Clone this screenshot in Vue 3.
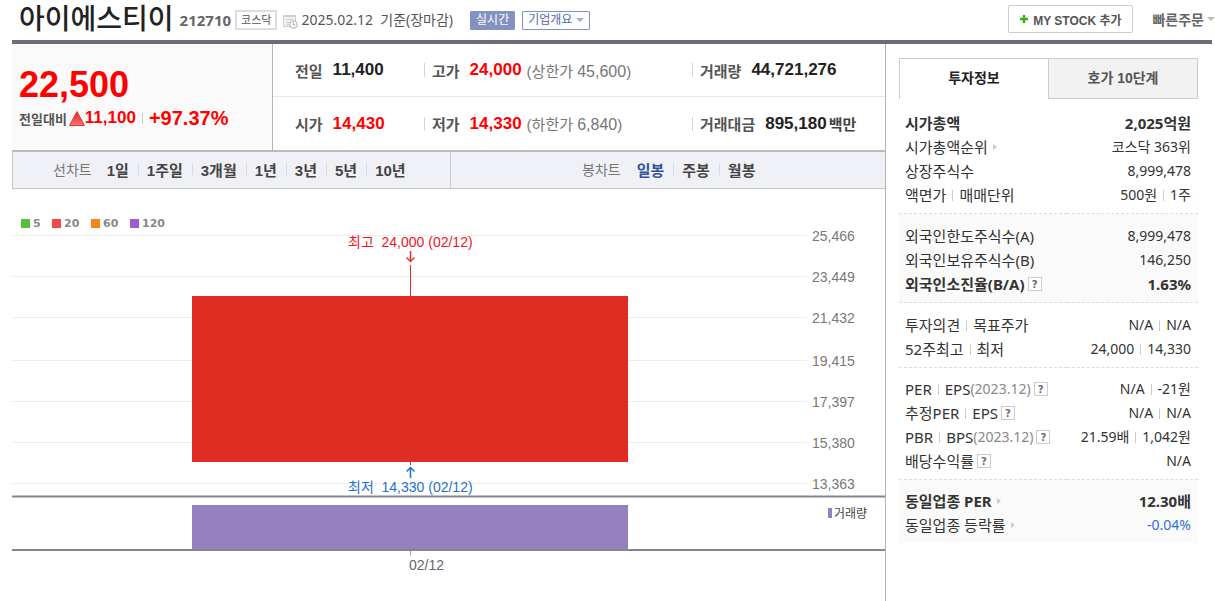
<script setup>
const linePeriods = ['1일', '1주일', '3개월', '1년', '3년', '5년', '10년']
const candlePeriods = ['일봉', '주봉', '월봉']

const averages = [
  { days: 5, cls: 'green', x: 9 },
  { days: 20, cls: 'red', x: 40 },
  { days: 60, cls: 'orange', x: 79 },
  { days: 120, cls: 'purple', x: 118 },
]

const ticks = [
  { label: '25,466', y: 46 },
  { label: '23,449', y: 87 },
  { label: '21,432', y: 128 },
  { label: '19,415', y: 171 },
  { label: '17,397', y: 212 },
  { label: '15,380', y: 253 },
  { label: '13,363', y: 294 },
]

const groups = [
  {
    name: 'cap',
    rows: [
      { label: ['시가총액'], value: ['2,025억원'], strong: true },
      { label: ['시가총액순위'], value: ['코스닥 363위'], arrow: true },
      { label: ['상장주식수'], value: ['8,999,478'] },
      { label: ['액면가', '매매단위'], value: ['500원', '1주'] },
    ],
  },
  {
    name: 'foreign',
    shaded: true,
    rows: [
      { label: ['외국인한도주식수(A)'], value: ['8,999,478'] },
      { label: ['외국인보유주식수(B)'], value: ['146,250'] },
      { label: ['외국인소진율(B/A)'], value: ['1.63%'], strong: true, help: true },
    ],
  },
  {
    name: 'opinion',
    rows: [
      { label: ['투자의견', '목표주가'], value: ['N/A', 'N/A'] },
      { label: ['52주최고', '최저'], value: ['24,000', '14,330'] },
    ],
  },
  {
    name: 'ratio',
    rows: [
      { label: ['PER', 'EPS'], date: '(2023.12)', value: ['N/A', '-21원'], help: true },
      { label: ['추정PER', 'EPS'], value: ['N/A', 'N/A'], help: true },
      { label: ['PBR', 'BPS'], date: '(2023.12)', value: ['21.59배', '1,042원'], help: true },
      { label: ['배당수익률'], value: ['N/A'], help: true },
    ],
  },
  {
    name: 'sector',
    shaded: true,
    rows: [
      { label: ['동일업종 PER'], value: ['12.30배'], strong: true, arrow: true },
      { label: ['동일업종 등락률'], value: ['-0.04%'], arrow: true, down: true },
    ],
  },
]
</script>

<template>
  <div class="page">
    <header class="head">
      <h1>아이에스티이</h1>
      <span class="code">212710</span>
      <span class="market">코스닥</span>
      <svg class="clock" width="15" height="15" viewBox="0 0 15 15" aria-hidden="true">
        <path d="M.5 1.500H12.500V12.500H.5z" fill="#f1f1f1" stroke="#cfcfcf" />
        <path d="M1 2.500H12M3 5.500H10M3 8.500H7M3 10.500H6" stroke="#cfcfcf" fill="none" />
        <circle cx="10.500" cy="10.500" r="3.700" fill="#fff" stroke="#bdbdbd" stroke-width="1.300" />
        <path d="M10.500 8.500V11H12.500" stroke="#aaa" fill="none" />
      </svg>
      <span class="date">2025.02.12&nbsp; 기준(장마감)</span>
      <button type="button" class="live">실시간</button>
      <button type="button" class="outline">기업개요<i class="caret blue"></i></button>
      <div class="tools">
        <button type="button" class="mystock">
          <svg width="8" height="8" viewBox="0 0 8 8" aria-hidden="true">
            <path d="M4 0V8M0 4H8" stroke="#2fb40a" stroke-width="2.400" />
          </svg>MY STOCK 추가
        </button>
        <button type="button" class="quick">빠른주문<i class="caret"></i></button>
      </div>
    </header>

    <div class="body">
      <main>
        <section class="quote">
          <div class="now">
            <strong class="price">22,500</strong>
            <div class="diff">
              <span class="dlabel">전일대비</span>
              <svg width="16" height="15" viewBox="0 0 16 15" aria-hidden="true">
                <defs>
                  <linearGradient id="rise" x1="0" y1="0" x2="0" y2="1">
                    <stop offset="0" stop-color="#d92323" />
                    <stop offset="1" stop-color="#ff7474" />
                  </linearGradient>
                </defs>
                <path d="M8 .5L15.500 14.500H.5z" fill="url(#rise)" stroke="#e03a3a" />
              </svg>
              <strong class="amount">11,100</strong>
              <i class="bar"></i>
              <strong class="rate">+97.37%</strong>
            </div>
          </div>
          <div class="facts">
            <div class="frow">
              <div><b>전일</b><strong>11,400</strong></div>
              <div class="sep"><b>고가</b><strong class="up">24,000</strong><small>(상한가 <em>45,600</em>)</small></div>
              <div class="sep"><b>거래량</b><strong>44,721,276</strong></div>
            </div>
            <div class="frow">
              <div><b>시가</b><strong class="up">14,430</strong></div>
              <div class="sep"><b>저가</b><strong class="up">14,330</strong><small>(하한가 <em>6,840</em>)</small></div>
              <div class="sep"><b>거래대금</b><strong>895,180</strong><span class="unit">백만</span></div>
            </div>
          </div>
        </section>

        <nav class="periods">
          <div class="lines">
            <span class="kind">선차트</span>
            <button v-for="p in linePeriods" :key="p" type="button">{{ p }}</button>
          </div>
          <div class="candles">
            <span class="kind">봉차트</span>
            <button v-for="(p, i) in candlePeriods" :key="p" type="button" :class="{ on: i === 0 }">{{ p }}</button>
          </div>
        </nav>

        <svg class="chart" viewBox="0 0 873 411" role="img" aria-label="일봉 차트">
          <g class="grid">
            <path v-for="t in ticks" :key="t.label" :d="`M0 ${t.y + 0.5}H795`" />
            <path d="M398.500 46V307" />
          </g>
          <g class="axis">
            <text v-for="t in ticks" :key="t.label" x="800" :y="t.y + 6">{{ t.label }}</text>
          </g>
          <g v-for="a in averages" :key="a.days">
            <rect :class="a.cls" :x="a.x" y="30" width="9" height="9" />
            <text class="avg" :x="a.x + 12" y="38">{{ a.days }}</text>
          </g>
          <rect class="candle" x="180" y="107" width="436" height="166" />
          <path class="wick" d="M398.500 76V107M398.500 273V276" />
          <text class="high" x="336" y="58">최고&nbsp; 24,000 (02/12)</text>
          <path class="harrow" d="M398.500 62V72M394.500 68.500L398.500 72.500L402.500 68.500" />
          <text class="low" x="336" y="303">최저&nbsp; 14,330 (02/12)</text>
          <path class="larrow" d="M398.500 289V279M394.500 282.500L398.500 278.500L402.500 282.500" />
          <rect class="volume" x="180" y="316" width="436" height="45" />
          <path class="base" d="M0 307.500H873M0 361H873" />
          <path class="tick" d="M398.500 362V367" />
          <rect class="volume" x="816" y="319" width="4" height="10" />
          <text class="vlabel" x="822" y="329">거래량</text>
          <text class="day" x="397" y="381">02/12</text>
        </svg>
      </main>

      <aside>
        <div class="tabs" role="tablist">
          <button type="button" role="tab" aria-selected="true" class="active">투자정보</button>
          <button type="button" role="tab" aria-selected="false">호가 10단계</button>
        </div>
        <table>
          <tbody v-for="g in groups" :key="g.name" :class="{ shaded: g.shaded }">
            <tr v-for="(r, i) in g.rows" :key="i" :class="{ strong: r.strong, down: r.down }">
              <th scope="row">
                <div class="cell">
                  <template v-for="(t, k) in r.label" :key="k"><i v-if="k" class="bar"></i><span>{{ t }}</span></template>
                  <span v-if="r.date" class="ym">{{ r.date }}</span>
                  <i v-if="r.arrow" class="more"></i>
                  <button v-if="r.help" type="button" class="help">?</button>
                </div>
              </th>
              <td>
                <div class="cell end">
                  <template v-for="(t, k) in r.value" :key="k"><i v-if="k" class="bar"></i><span>{{ t }}</span></template>
                </div>
              </td>
            </tr>
          </tbody>
        </table>
      </aside>
    </div>
  </div>
</template>

<style>
body { background: #fff; overflow: hidden; }
</style>

<style scoped>
* { box-sizing: border-box; }
.page {
  padding: 0 3px 0 12px;
  font-family: "Noto Sans", "Noto Sans CJK KR", sans-serif;
  font-size: 14px;
  color: #333;
}
button {
  font: inherit;
  color: inherit;
  margin: 0;
  padding: 0;
  border: 0;
  background: none;
  white-space: nowrap;
}
i { display: inline-block; }

.head {
  display: flex;
  align-items: center;
  height: 44px;
  border-bottom: 4px solid #686d78;
  white-space: nowrap;
}
h1 { margin: 0 6px 5px 7px; font-size: 28px; line-height: 32px; font-weight: 500; color: #222; }
.code { font-size: 15px; font-weight: 700; color: #666; line-height: 20px; }
.market {
  margin: 0 6px 0 4px;
  padding: 0 4px;
  border: 2px solid #ddd;
  font-size: 11px;
  line-height: 16px;
  color: #555;
}
.clock { margin: 2px 3px 0 0; }
.date { color: #555; line-height: 20px; }
.live, .outline {
  height: 19px;
  border: 1px solid #8492c1;
  border-radius: 1px;
  font-size: 12px;
  line-height: 16px;
}
.live { margin-left: 17px; padding: 0 5px; background: #8492c1; color: #fff; }
.outline { display: flex; align-items: center; gap: 4px; margin-left: 7px; padding: 0 5px; color: #5468a8; background: #fcfcff; }
.caret { border: 4px solid transparent; border-top-color: #bbb; border-bottom: 0; }
.caret.blue { border-top-color: #9dabd5; }
.tools { display: flex; align-items: center; margin: 0 -3px 2px auto; font-weight: 700; font-size: 12px; }
.mystock {
  display: flex;
  align-items: center;
  gap: 5px;
  height: 28px;
  padding: 0 11px;
  border: 1px solid #ccc;
  border-radius: 2px;
  font-family: "Liberation Sans", "Noto Sans CJK KR", sans-serif;
  color: #555;
}
.quick { display: flex; align-items: center; gap: 3px; margin-left: 19px; font-size: 14px; font-weight: 700; color: #666; }

.body { display: flex; min-height: 557px; }
main { flex: 1; min-width: 0; border-right: 1px solid #b5b5b9; }

.quote {
  display: flex;
  height: 106px;
  font-family: "Liberation Sans", "Noto Sans CJK KR", sans-serif;
}
.now { width: 261px; padding: 20px 7px 0; background: #fafafa; border-right: 1px solid #b5b5bb; color: #f00; }
.price { display: block; font-size: 36px; line-height: 42px; }
.diff { display: flex; align-items: center; height: 24px; white-space: nowrap; }
.dlabel { margin-right: 2px; font-size: 13px; font-weight: 700; color: #555; }
.amount { font-size: 17px; }
.rate { font-size: 20px; }
.bar { width: 1px; height: 11px; margin: 0 6px; background: #ccc; }
.facts { flex: 1; }
.frow {
  display: grid;
  grid-template-columns: 129px 268px 1fr;
  align-items: center;
  height: 54px;
  padding-left: 22px;
  white-space: nowrap;
}
.frow:first-child { height: 52px; }
.frow + .frow { border-top: 1px solid #e8e8e8; }
.frow > div { display: flex; align-items: center; height: 20px; }
.sep::before { content: ""; width: 1px; height: 14px; margin-right: 7px; background: #d5d5d5; }
.frow b { margin-right: 10px; font-size: 15px; font-weight: 700; color: #555; }
.frow strong { font-size: 17px; color: #222; }
.frow strong.up { color: #f00; }
small { margin-left: 5px; font-size: 15px; color: #777; }
em { font-style: normal; font-size: 16px; }
.unit { margin-left: 2px; font-size: 15px; font-weight: 700; color: #444; }

.periods {
  display: flex;
  height: 39px;
  border: 1px solid #c4c5cc;
  border-width: 2px 0 1px 1px;
  border-top-color: #b9bac3;
  background: #f0f1f6;
  font-family: "Liberation Sans", "Noto Sans CJK KR", sans-serif;
  font-size: 15px;
}
.lines, .candles { display: flex; align-items: center; padding-bottom: 2px; }
.lines { width: 438px; padding-left: 40px; border-right: 1px solid #c8c9cf; }
.candles { flex: 1; padding-left: 131px; }
.kind { margin-right: 6px; font-size: 14px; color: #777; }
.periods button { display: flex; align-items: center; padding: 0 9px; font-size: 15px; font-weight: 700; color: #444; }
.candles .kind { margin-right: 7px; }
.periods button + button { position: relative; }
.periods button + button::before {
  content: "";
  position: absolute;
  left: 0;
  width: 1px;
  height: 12px;
  background: #d8d9de;
}
.periods button.on { color: #3450a0; }

.chart { display: block; width: 100%; font-family: "Liberation Sans", "Noto Sans CJK KR", sans-serif; font-size: 14px; }
.grid { stroke: #eee; fill: none; }
.axis { fill: #777; }
.green { fill: #57bf3e; }
.red { fill: #f04a4a; }
.orange { fill: #f58718; }
.purple { fill: #a05ccd; }
.avg { font: 700 11px "DejaVu Sans", sans-serif; fill: #888; }
.candle { fill: #df2d24; }
.wick { fill: none; stroke: #df2d24; stroke-width: 1; }
.high { fill: #f0141e; }
.low { fill: #1f70d6; }
.harrow, .larrow { fill: none; stroke-width: 1.5; stroke: #e8352d; }
.larrow { stroke: #1f70d6; }
.volume { fill: #9780c0; }
.base { stroke: #85858f; stroke-width: 2; }
.tick { fill: none; stroke: #aaa; }
.vlabel { font-size: 12px; fill: #444; }
.day { fill: #666; }

aside { width: 326px; padding: 14px 14px 0 13px; }
.tabs { display: flex; height: 41px; margin-bottom: 12px; font: 700 14px/18px "Liberation Sans", "Noto Sans CJK KR", sans-serif; }
.tabs button { flex: 1; padding-bottom: 2px; background: #f2f2f2; border: 1px solid #ccc; color: #555; }
.tabs .active { background: #fff; color: #222; border-width: 1px 0 0 1px; }
table { width: 100%; border-collapse: collapse; line-height: 24px; }
tr { height: 24px; }
th, td { padding: 0 7px 0 0; font-weight: 400; white-space: nowrap; }
th { padding: 0 0 0 6px; font-size: 15px; text-align: left; }
tbody tr:first-child > * { padding-top: 10px; }
tbody:first-child tr:first-child > * { padding-top: 0; }
tbody tr:last-child > * { padding-bottom: 6px; }
tbody + tbody { border-top: 1px dashed #ddd; }
tbody:nth-child(n + 4) tr:first-child > * { padding-top: 9px; }
.cell { display: flex; align-items: center; height: 24px; }
.end { justify-content: flex-end; }
.shaded { background: #fafafa; }
.strong th, .strong td { font-weight: 700; }
.strong td { font-size: 15px; }
.down td { color: #3070d8; }
.ym { font-size: 14px; color: #888; }
.more { margin-left: 5px; border: 3px solid transparent; border-left: 4px solid #ccc; border-right: 0; }
.help {
  width: 14px;
  height: 14px;
  margin-left: 3px;
  border: 1px solid #ccc;
  background: #fff;
  font: 700 10px/11px "DejaVu Sans", sans-serif;
  color: #666c7c;
}
</style>
